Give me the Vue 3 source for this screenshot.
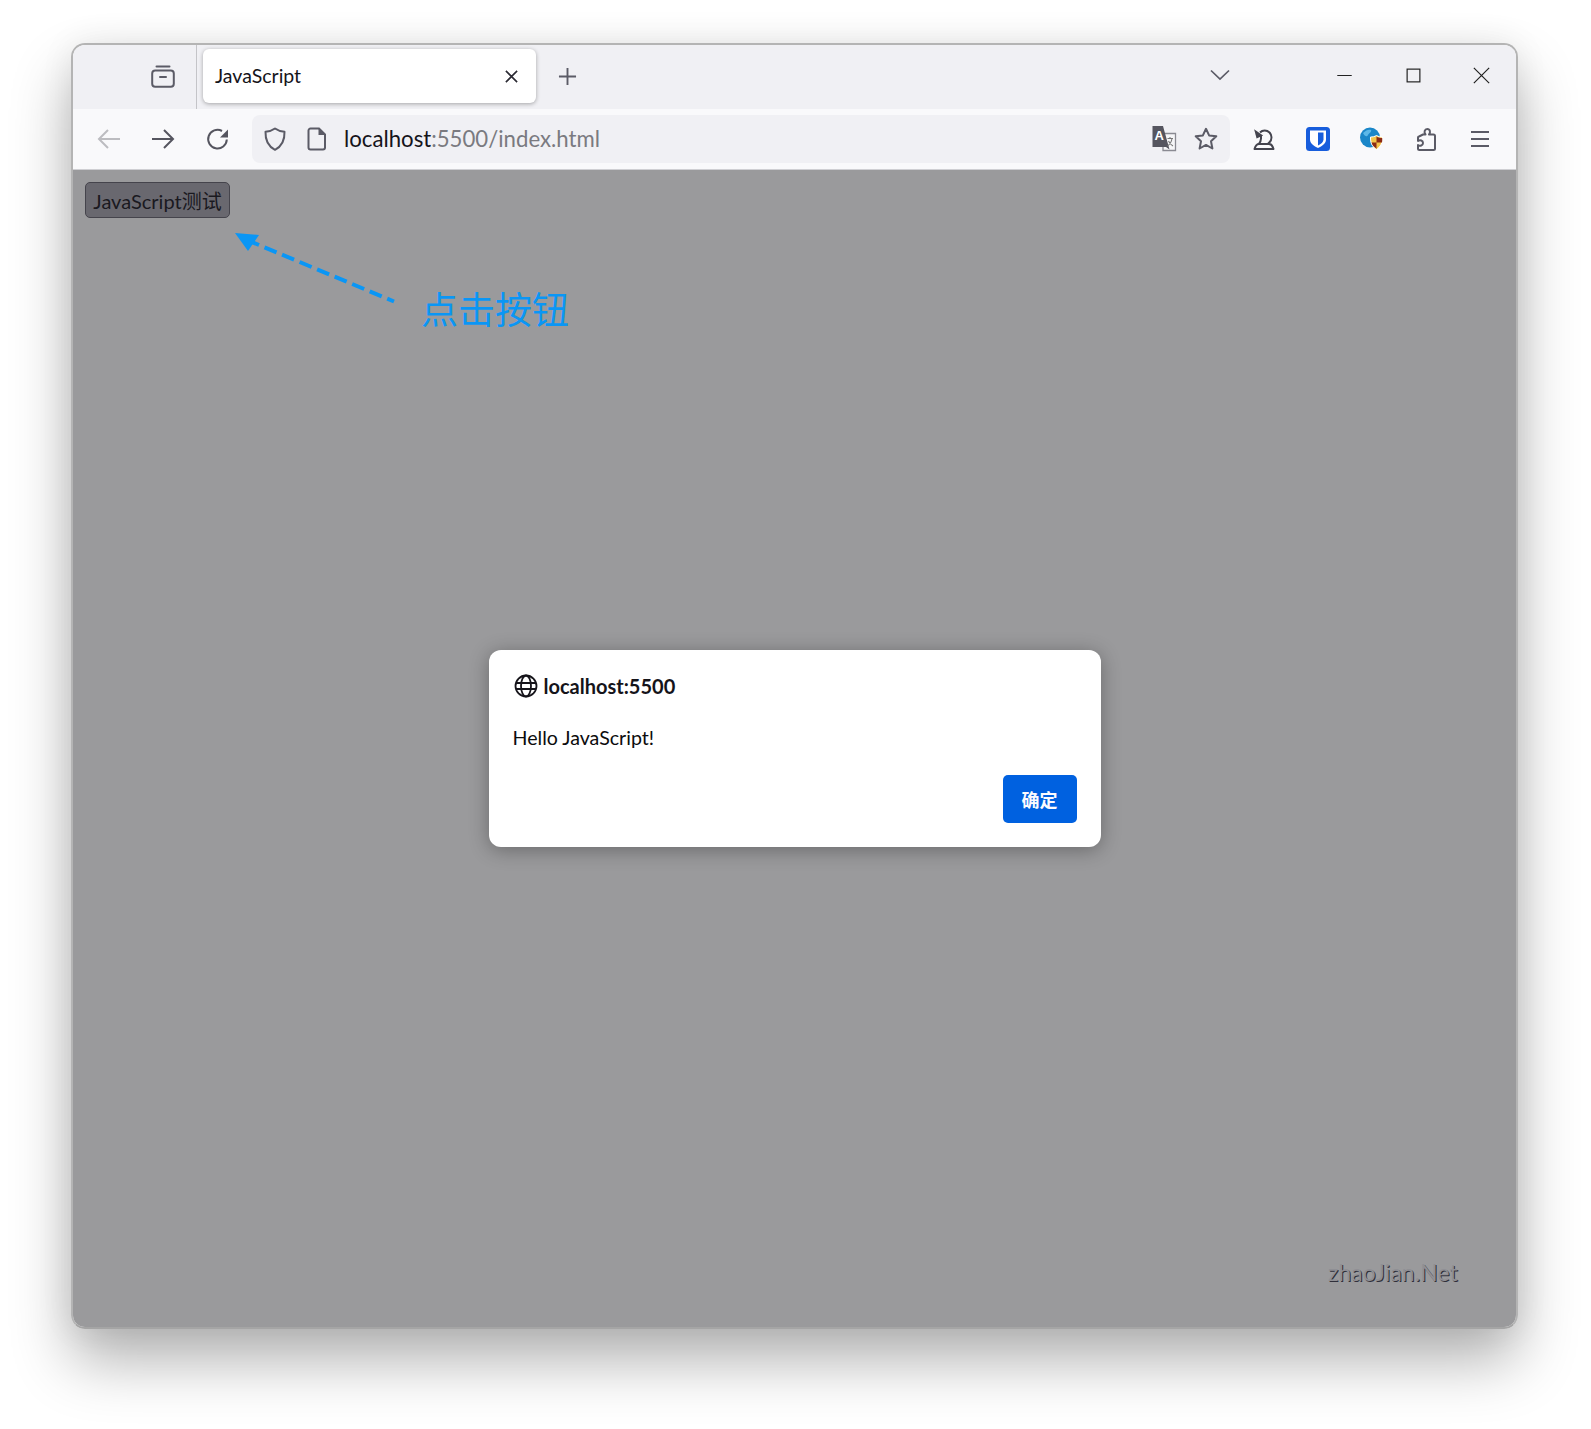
<script setup>
const leftTools = ['back', 'forward', 'reload']
</script>

<template>
  <div class="stage">
    <div class="window">
      <div class="strip">
        <div class="strip-lead">
          <svg class="ic" viewBox="0 0 24 24" fill="none" stroke="#5b5b66" stroke-width="2">
            <path d="M5.500 2.500h13" stroke-linecap="round"/>
            <rect x="1.200" y="6.500" width="21.600" height="16.300" rx="3"/>
            <path d="M9 13h6" stroke-linecap="round"/>
          </svg>
        </div>
        <div class="tab">
          <span class="tab-title">JavaScript</span>
          <svg class="tab-x" viewBox="0 0 16 16" fill="none" stroke="#2b2a33" stroke-width="1.700"><path d="M2 2l12 12M14 2L2 14"/></svg>
        </div>
        <svg class="plus" viewBox="0 0 20 20" fill="none" stroke="#5b5b66" stroke-width="2"><path d="M10 1v18M1 10h18"/></svg>
        <div class="spring"></div>
        <svg class="chev" viewBox="0 0 20 12" fill="none" stroke="#5b5b66" stroke-width="1.700"><path d="M1 1.500l9 8.500 9-8.500"/></svg>
        <div class="controls">
          <svg viewBox="0 0 20 20" fill="none" stroke="#222" stroke-width="1.400"><path d="M1.500 10h17"/></svg>
          <svg viewBox="0 0 20 20" fill="none" stroke="#222" stroke-width="1.400"><rect x="2.500" y="2.500" width="15" height="15"/></svg>
          <svg viewBox="0 0 20 20" fill="none" stroke="#222" stroke-width="1.400"><path d="M1 1l18 18M19 1L1 19"/></svg>
        </div>
      </div>

      <div class="toolbar">
        <div class="nav">
          <svg v-for="name in leftTools" :key="name" class="ic" viewBox="0 0 24 24" fill="none" :stroke="name === 'back' ? '#bcbcc0' : '#55555f'" stroke-width="2">
            <path v-if="name === 'back'" d="M23 12H2M11 3l-9 9 9 9"/>
            <path v-else-if="name === 'forward'" d="M1 12h21M13 3l9 9-9 9"/>
            <template v-else>
              <path d="M20.800 12.500A9.300 9.300 0 1 1 16 4"/>
              <path d="M22 2.500v8h-8z" fill="#55555f" stroke="none"/>
            </template>
          </svg>
        </div>
        <div class="urlbar">
          <svg class="ic shield" viewBox="0 0 24 24" fill="none" stroke="#5b5b66" stroke-width="2"><path d="M12 1.500c2.500 1.800 6 3 9.500 3.300.3 8.500-2.500 14.500-9.500 18-7-3.500-9.800-9.500-9.500-18C6 4.500 9.500 3.300 12 1.500z" stroke-linejoin="round"/></svg>
          <svg class="ic pageic" viewBox="0 0 24 24" fill="none" stroke="#5b5b66" stroke-width="2"><path d="M5.500 1.500h8.500l6 6v13a2 2 0 0 1-2 2H5.500a2 2 0 0 1-2-2v-17a2 2 0 0 1 2-2z"/><path d="M13.500 1.500v6.500h6.500z" fill="#5b5b66" stroke="none"/></svg>
          <div class="url"><span class="host">localhost</span><span class="rest">:5500/index.html</span></div>
          <svg class="ic translate" viewBox="0 0 26 26">
            <path d="M12 7.500h12.500v17H12z" fill="#f6f6f8" stroke="#8a8a92" stroke-width="1.300"/>
            <path d="M1.500 0h10.500l6.500 23.500-3.500-2.500H1.500z" fill="#55555f"/>
            <text x="3.500" y="14" class="tr-a">A</text>
            <path d="M16.500 12.500h5.500M19 11v1.500M21 12.500c-.5 3.500-2.500 6-4.500 7.500M17.500 15c1 2 2.500 4 4.500 5" fill="none" stroke="#777" stroke-width="1.100"/>
          </svg>
          <svg class="ic star" viewBox="0 0 24 24" fill="none" stroke="#5b5b66" stroke-width="2" stroke-linejoin="round"><path d="M12 1.800l3.100 6.600 7.200 .9-5.300 5 1.400 7.200-6.400-3.600-6.400 3.600 1.400-7.200-5.300-5 7.200-.9z"/></svg>
        </div>
        <div class="tools">
          <svg class="ic" viewBox="0 0 24 24" fill="none" stroke="#44444e" stroke-width="2">
            <path d="M8 5.500c1.200-1.300 2.800-2 4.700-2a6.800 6.800 0 0 1 6.800 6.800c0 2.800-1.500 5-3.500 6.200"/>
            <path d="M9 9v2.500c0 2-1 4-2.200 5.500"/>
            <path d="M3 1.500l.5 9.500 7-1.500z" fill="#44444e" stroke="none" transform="rotate(-12 6 6)"/>
            <path d="M7 17h10c2 0 3.500 1.500 4.500 5H2.500C3.500 18.500 5 17 7 17z" stroke-linejoin="round"/>
          </svg>
          <svg class="ic" viewBox="0 0 24 24">
            <rect width="24" height="24" rx="3.500" fill="#175ddc"/>
            <path d="M4 3.500h16v9c0 4-4 6.500-8 8.500-4-2-8-4.500-8-8.500z" fill="#fff"/>
            <path d="M12 5.500h5.500v7c0 2.500-2.500 4.500-5.500 6z" fill="#175ddc"/>
          </svg>
          <svg class="ic" viewBox="0 0 24 24">
            <circle cx="10" cy="10.500" r="10" fill="#1a86c8"/>
            <path d="M3 6c3-3 6-4 8-3 1 2-2 3-3 5s-3 2-5-2zM11 11c3-1 5 0 6 2-1 3-3 5-5 6-2-3-2-5-1-8z" fill="#5cb8e8"/>
            <path d="M16.500 8.500c2 1.200 4 1.500 6 1.500.3 5.500-2 10-6 12.500-4-2.500-6.300-7-6-12.500 2 0 4-.3 6-1.500z" fill="#f4c54a" stroke="#fff" stroke-width="1"/>
            <path d="M16.500 10v5.500H11.500c.5 2.500 2.500 4.500 5 6.200zM16.500 15.500h5.500c.3-1.500.3-3.500.2-4.500-2 0-4-.3-5.700-1.200z" fill="#8c2a14"/>
          </svg>
          <svg class="ic" viewBox="0 0 24 24" fill="none" stroke="#5b5b66" stroke-width="2" stroke-linejoin="round"><path d="M9 7.500h2.500c-1.800-2-1-5.500 1.800-5.500s3.500 3.500 1.700 5.500h4.500c1 0 1.500.5 1.500 1.500v12.500c0 1-.5 1.500-1.500 1.500H5.500c-1 0-1.500-.5-1.500-1.500v-3.500c2 1.500 5 .5 5-2s-3-3.500-5-2v-3.500c0-.5.300-1 1-1z"/></svg>
          <svg class="ic" viewBox="0 0 24 24" fill="none" stroke="#5b5b66" stroke-width="2"><path d="M3 5h18M3 12h18M3 19h18"/></svg>
        </div>
      </div>

      <div class="content">
        <button class="page-btn" type="button">JavaScript测试</button>

        <svg class="arrow" width="170" height="80" viewBox="0 0 170 80">
          <path d="M13 8L160 69.500" fill="none" stroke="#0a96f5" stroke-width="4" stroke-dasharray="13 6"/>
          <path d="M1 1l24 2-11 16z" fill="#0a96f5"/>
        </svg>
        <div class="note">点击按钮</div>
        <div class="mark">zhaoJian.Net</div>

        <div class="overlay">
          <div class="dialog">
            <div class="d-head">
              <svg class="d-globe" viewBox="0 0 24 24" fill="none" stroke="#15141a" stroke-width="1.800">
                <circle cx="12" cy="12" r="10.500"/>
                <ellipse cx="12" cy="12" rx="5" ry="10.500"/>
                <path d="M2 9h20M2 15h20"/>
              </svg>
              <span class="d-title">localhost:5500</span>
            </div>
            <div class="d-msg">Hello JavaScript!</div>
            <div class="d-foot"><button class="ok" type="button">确定</button></div>
          </div>
        </div>
      </div>
    </div>
  </div>
</template>

<style>
html, body { margin: 0; background: #fff; }
</style>

<style scoped>
.stage {
  width: 1591px;
  height: 1429px;
  box-sizing: border-box;
  padding: 43px 73px 0 71px;
  background: #fff;
  overflow: hidden;
  font-family: Lato, "Noto Sans CJK SC", sans-serif;
}
.window {
  width: 1447px;
  height: 1286px;
  box-sizing: border-box;
  border: 2px solid #b4b4b4;
  border-bottom-color: #a5a5a5;
  border-radius: 14px;
  overflow: hidden;
  display: flex;
  flex-direction: column;
  box-shadow: 0 32px 60px rgba(0,0,0,.3), 0 0 34px rgba(0,0,0,.07);
}
.ic { width: 24px; height: 24px; flex: none; display: block; }
.strip {
  height: 64px;
  flex: none;
  background: #f0f0f4;
  display: flex;
  align-items: center;
  box-sizing: border-box;
}
.strip-lead {
  width: 124px;
  height: 64px;
  flex: none;
  box-sizing: border-box;
  border-right: 1px solid #c4c4c8;
  padding: 0 0 3px 78px;
  display: flex;
  align-items: center;
}
.tab {
  margin-left: 6px;
  width: 333px;
  height: 54px;
  margin-top: -2px;
  flex: none;
  background: #fff;
  border-radius: 6px;
  box-shadow: 0 1px 4px rgba(0,0,0,.32);
  display: flex;
  align-items: center;
  justify-content: space-between;
  padding: 0 17px 0 12px;
  box-sizing: border-box;
}
.tab-title { font-size: 19.500px; line-height: 24px; margin-top: -1px; color: #15141a; }
.tab-x { width: 15px; height: 15px; display: block; }
.plus { width: 19px; height: 19px; margin: 0 0 2px 22px; flex: none; }
.spring { flex: 1; }
.chev { width: 20px; height: 12px; flex: none; margin: 0 106px 4px 0; }
.controls {
  display: flex;
  align-items: center;
  gap: 51.500px;
  padding: 0 26px 3px 0;
}
.controls svg { width: 17px; height: 17px; display: block; }
.toolbar {
  height: 61px;
  flex: none;
  box-sizing: border-box;
  background: #f9f9fb;
  border-bottom: 1px solid #cfcfd3;
  display: flex;
  align-items: center;
}
.nav {
  width: 179px;
  flex: none;
  display: flex;
  gap: 30px;
  padding-left: 24px;
  box-sizing: border-box;
}
.nav svg:nth-child(3) { margin-left: 1px; }
.urlbar {
  width: 978px;
  height: 48px;
  flex: none;
  box-sizing: border-box;
  background: #f0f0f4;
  border-radius: 8px;
  display: flex;
  align-items: center;
  padding: 0 12px 0 11px;
}
.pageic { margin-left: 18px; }
.url { flex: 1; margin: -2px 0 0 15px; font-size: 22.200px; white-space: nowrap; }
.host { color: #15141a; }
.rest { color: #7a7a80; }
.translate { width: 26px; height: 26px; margin-right: 17px; }
.tr-a { font: bold 13px "Liberation Sans", sans-serif; fill: #fff; }
.tools {
  flex: 1;
  display: flex;
  align-items: center;
  gap: 30px;
  padding-left: 22px;
}
.content {
  flex: 1;
  background: #9a9a9c;
  position: relative;
  padding: 12px 0 0 12px;
}
.page-btn {
  display: block;
  width: 145px;
  height: 36px;
  padding: 0;
  box-sizing: border-box;
  background: #69686f;
  border: 1px solid #45444c;
  border-radius: 5px;
  color: #1a191f;
  font: 20px Lato, "Noto Sans CJK SC", sans-serif;
}
.arrow { position: absolute; left: 161px; top: 62px; }
.note {
  position: absolute;
  left: 348px;
  top: 112px;
  font-size: 37px;
  line-height: 52px;
  color: #0a96f5;
  font-family: "Noto Sans CJK SC", sans-serif;
}
.mark {
  position: absolute;
  left: 1255px;
  top: 1089px;
  font-size: 22.700px;
  line-height: 28px;
  color: #8f8f94;
  text-shadow: 1px 1px 0 #2f2f3a;
  letter-spacing: .2px;
}
.overlay {
  position: absolute;
  inset: 0;
  display: flex;
  align-items: center;
  justify-content: center;
  padding-bottom: 1px;
}
.dialog {
  width: 612px;
  height: 197px;
  box-sizing: border-box;
  background: #fff;
  border-radius: 12px;
  box-shadow: 0 3px 20px rgba(0,0,0,.32);
  padding: 24px;
  display: flex;
  flex-direction: column;
  color: #15141a;
}
.d-head { display: flex; align-items: center; height: 24px; }
.d-globe { width: 24px; height: 24px; margin-left: 1px; display: block; flex: none; }
.d-title { margin-left: 6px; font-size: 20px; font-weight: 700; line-height: 24px; }
.d-msg { margin-top: 27px; font-size: 19.600px; line-height: 26px; color: #0c0c0d; }
.d-foot { margin-top: auto; display: flex; justify-content: flex-end; }
.ok {
  width: 74px;
  height: 48px;
  padding: 0;
  border: none;
  border-radius: 5px;
  background: #0061e0;
  color: #fbfbfe;
  font: 700 18px "Noto Sans CJK SC", sans-serif;
}
</style>
